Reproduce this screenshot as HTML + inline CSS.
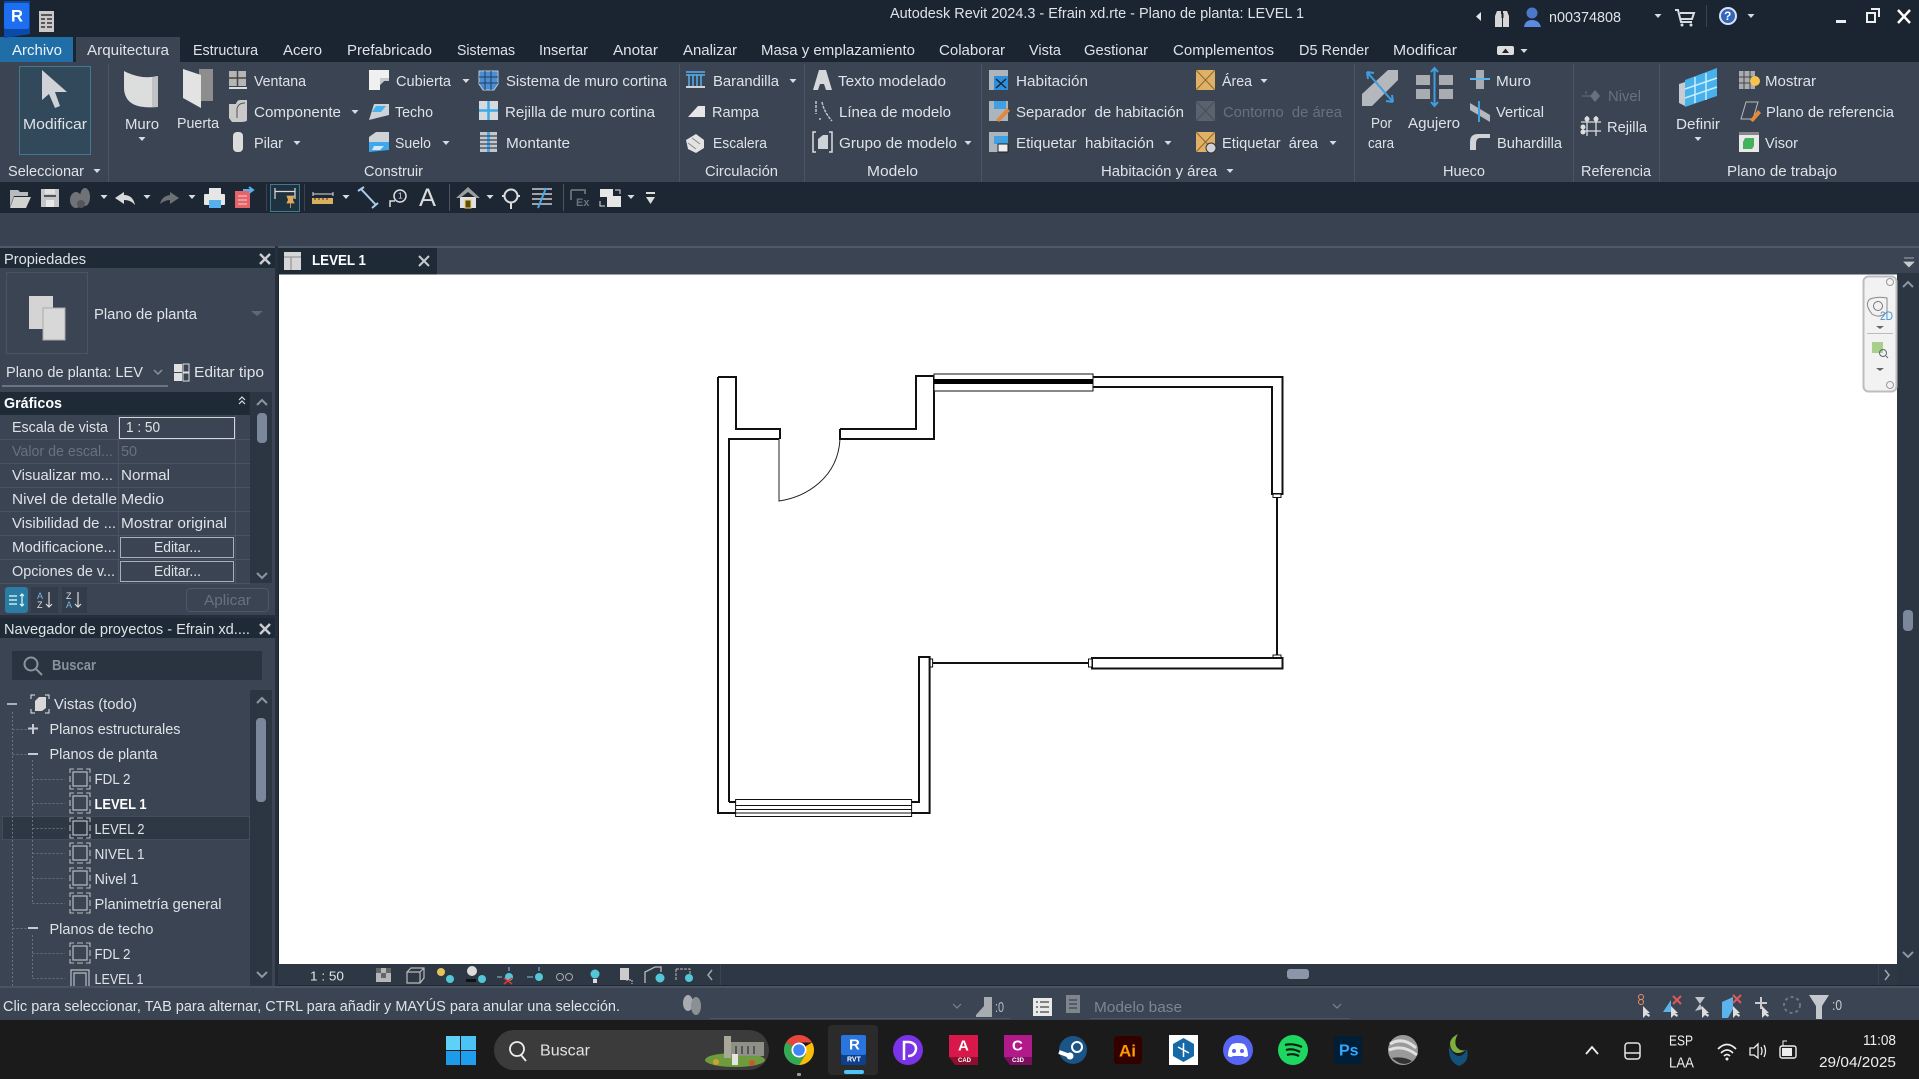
<!DOCTYPE html>
<html lang="es"><head><meta charset="utf-8"><title>Autodesk Revit 2024.3</title>
<style>
html,body{margin:0;padding:0;width:1919px;height:1079px;overflow:hidden;background:#1b2532}
svg{display:block}
text{font-family:"Liberation Sans",sans-serif;font-size:14.7px;fill:#dfe3e7;dominant-baseline:central;transform:translateY(1px)}
.d{fill:#68717d}.b{font-weight:bold;fill:#fff}
.s{fill:none;stroke:#111;stroke-width:2}
.t{fill:#fff;stroke:#111;stroke-width:1}
</style></head><body>
<svg width="1919" height="1079" viewBox="0 0 1919 1079" xmlns="http://www.w3.org/2000/svg">
<defs>
<path id="ar" d="M-3.5 -2H3.5L0 2Z" fill="#d8dce0"/>
<g id="vw" fill="none" stroke="#b9bdc2" stroke-width="1.2"><rect x="3" y="3" width="14" height="14"/><path d="M0 4V0H4M7 0H13M16 0H20V4M20 7V13M20 16V20H16M13 20H7M4 20H0V16M0 13V7" stroke-width="1.1"/></g>
</defs>
<rect width="1919" height="1079" fill="#1b2532"/>
<!-- ribbon -->
<rect y="62" width="1919" height="120" fill="#3a4453"/>
<rect y="182" width="1919" height="31" fill="#1d2734"/>
<rect y="213" width="1919" height="33" fill="#384250"/>
<rect y="246" width="1919" height="2" fill="#4f5967"/>
<rect x="0" y="37" width="73" height="25" fill="#1f6ea8"/>
<rect x="76" y="37" width="104" height="25" fill="#3a4453"/>
<!-- logo -->
<path d="M4 1H30V34L4 38Z" fill="#0a4aa8"/><rect x="4" y="3" width="25" height="26" rx="2" fill="#1d6ef0"/>
<text x="11" y="15" class="b" style="font-size:17px" textLength="12" lengthAdjust="spacingAndGlyphs">R</text>
<rect x="39" y="11" width="15" height="21" fill="#c9c9c9"/><path d="M41 15H52M41 19H45M47 19H52M41 23H45M47 23H52M41 27H45M47 27H52" stroke="#333" stroke-width="1.6"/>
<text x="890" y="13" textLength="414" lengthAdjust="spacingAndGlyphs">Autodesk Revit 2024.3 - Efrain xd.rte - Plano de planta: LEVEL 1</text>
<!-- top right -->
<path d="M1481 12V21L1476 16.500Z" fill="#e6e6e6"/>
<path d="M1495 16L1497 11H1501V14H1502V27H1495ZM1509 16L1507 11H1503V14H1503V27H1509Z" fill="#d6d6d6"/><rect x="1501.500" y="13" width="2" height="5" fill="#1b2532"/>
<circle cx="1532" cy="13" r="5.500" fill="#4d78c8"/><path d="M1524 27Q1525 20 1532 20Q1539 20 1541 27Z" fill="#5d8ae0"/>
<text x="1549" y="17" textLength="72" lengthAdjust="spacingAndGlyphs">n00374808</text>
<use href="#ar" x="1658" y="16"/>
<path d="M1675 10h3l3 12h11M1680 13h14l-2 6h-11" fill="none" stroke="#d8dce0" stroke-width="2"/><circle cx="1682" cy="25" r="1.500" fill="#ddd"/><circle cx="1691" cy="25" r="1.500" fill="#ddd"/>
<rect x="1706" y="5" width="1" height="22" fill="#3a4453"/>
<circle cx="1728" cy="16" r="9" fill="#d7e4f8"/><circle cx="1728" cy="16" r="7" fill="#3465b8"/><text x="1724" y="15" class="b" style="font-size:12px">?</text>
<use href="#ar" x="1751" y="16"/>
<rect x="1836" y="20" width="10" height="3" fill="#eee"/>
<path d="M1871 9h8v8M1867 13h8v9h-8z" fill="none" stroke="#eee" stroke-width="2"/>
<path d="M1898 10L1910 23M1910 10L1898 23" stroke="#fff" stroke-width="2.500"/>
<!-- tabs -->
<text x="12" y="50" style="fill:#eef3f8" textLength="50" lengthAdjust="spacingAndGlyphs">Archivo</text>
<text x="87" y="50" textLength="82" lengthAdjust="spacingAndGlyphs">Arquitectura</text>
<text x="193" y="50" textLength="65" lengthAdjust="spacingAndGlyphs">Estructura</text>
<text x="283" y="50" textLength="39" lengthAdjust="spacingAndGlyphs">Acero</text>
<text x="347" y="50" textLength="85" lengthAdjust="spacingAndGlyphs">Prefabricado</text>
<text x="457" y="50" textLength="58" lengthAdjust="spacingAndGlyphs">Sistemas</text>
<text x="539" y="50" textLength="49" lengthAdjust="spacingAndGlyphs">Insertar</text>
<text x="613" y="50" textLength="45" lengthAdjust="spacingAndGlyphs">Anotar</text>
<text x="683" y="50" textLength="54" lengthAdjust="spacingAndGlyphs">Analizar</text>
<text x="761" y="50" textLength="154" lengthAdjust="spacingAndGlyphs">Masa y emplazamiento</text>
<text x="939" y="50" textLength="66" lengthAdjust="spacingAndGlyphs">Colaborar</text>
<text x="1029" y="50" textLength="32" lengthAdjust="spacingAndGlyphs">Vista</text>
<text x="1084" y="50" textLength="64" lengthAdjust="spacingAndGlyphs">Gestionar</text>
<text x="1173" y="50" textLength="101" lengthAdjust="spacingAndGlyphs">Complementos</text>
<text x="1299" y="50" textLength="70" lengthAdjust="spacingAndGlyphs">D5 Render</text>
<text x="1393" y="50" textLength="64" lengthAdjust="spacingAndGlyphs">Modificar</text>
<rect x="1497" y="46" width="17" height="9" rx="2" fill="#ddd"/><path d="M1502 53L1505.500 48.500L1509 53Z" fill="#222"/><use href="#ar" x="1524" y="51"/>
<!-- ribbon separators -->
<g fill="#4a5462"><rect x="108" y="64" width="1" height="118"/><rect x="679" y="64" width="1" height="118"/><rect x="804" y="64" width="1" height="118"/><rect x="981" y="64" width="1" height="118"/><rect x="1354" y="64" width="1" height="118"/><rect x="1573" y="64" width="1" height="118"/><rect x="1659" y="64" width="1" height="118"/></g>
<!-- Modificar -->
<rect x="19.500" y="66.500" width="71" height="88" fill="#32495b" stroke="#3f7a90"/>
<path d="M42 70V100L49 94L55 108L60 106L55 92L67 92Z" fill="#cfd2d6"/>
<text x="23" y="124" textLength="64" lengthAdjust="spacingAndGlyphs">Modificar</text>
<text x="8" y="171" textLength="76" lengthAdjust="spacingAndGlyphs">Seleccionar</text><use href="#ar" x="97" y="171"/>
<!-- Muro / Puerta -->
<path d="M124 71Q141 80 158 76V107Q135 109 128 100Q124 95 124 88Z" fill="#dcdddd"/><path d="M152 77L158 76V107H152Z" fill="#c0c2c4"/>
<text x="125" y="124" textLength="34" lengthAdjust="spacingAndGlyphs">Muro</text><use href="#ar" x="142" y="139"/>
<rect x="199" y="69" width="14" height="32" fill="#8d8d8d"/><path d="M183 69L201 75V108L183 98Z" fill="#e3e3e3"/>
<text x="177" y="123" textLength="42" lengthAdjust="spacingAndGlyphs">Puerta</text>
<!-- Col 1 -->
<rect x="229" y="71" width="17" height="15" fill="#b5b5b5"/><path d="M237.500 71V86M229 78H246" stroke="#444" stroke-width="1.500"/><rect x="229" y="87" width="18" height="2" fill="#ddd"/>
<path d="M229 104H236Q237 100 240 100H247V120Q247 122 240 122H232L229 118Z" fill="#c9c9c9"/><path d="M237 118V109Q238 103 245 103" fill="none" stroke="#555"/>
<rect x="233" y="132" width="10" height="20" rx="4" fill="#dcdcdc"/>
<text x="254" y="81" textLength="52" lengthAdjust="spacingAndGlyphs">Ventana</text>
<text x="254" y="112" textLength="87" lengthAdjust="spacingAndGlyphs">Componente</text><use href="#ar" x="355" y="112"/>
<text x="254" y="143" textLength="29" lengthAdjust="spacingAndGlyphs">Pilar</text><use href="#ar" x="297" y="143"/>
<!-- Col 2 -->
<path d="M369 70H389V81H384L380 85V90H369Z" fill="#f0f0f0"/><path d="M380 85V78H389V81H384Z" fill="#c6c8cb"/>
<path d="M369 120L374 104H389V115Z" fill="#cfd2d6"/><path d="M372 112L376 106H386L381 112Z" fill="#45b3f0"/>
<path d="M369 137L376 132H389V142H369Z" fill="#cfd2d6"/><path d="M369 152V142H389V150Z" fill="#3fa8ea"/><path d="M374 146H384L380 150H372Z" fill="#cfeaff"/>
<text x="396" y="81" textLength="55" lengthAdjust="spacingAndGlyphs">Cubierta</text><use href="#ar" x="466" y="81"/>
<text x="395" y="112" textLength="38" lengthAdjust="spacingAndGlyphs">Techo</text>
<text x="395" y="143" textLength="36" lengthAdjust="spacingAndGlyphs">Suelo</text><use href="#ar" x="446" y="143"/>
<!-- Col 3 -->
<path d="M479 71H498V84L494 90H483L479 84Z" fill="#4b8fd2" stroke="#b8c8d8"/><path d="M485 71V90M491 71V90M479 77H498M479 83H498" stroke="#1f3c5c"/>
<rect x="479" y="101" width="19" height="19" fill="#d7dadd"/><path d="M488.500 101V120M479 110.500H498" stroke="#3fa8ea" stroke-width="2.500"/>
<rect x="480" y="132" width="17" height="20" fill="#c3c7cc"/><path d="M488.500 132V152" stroke="#3fa8ea" stroke-width="3"/><path d="M480 136H497M480 140H497M480 144H497M480 148H497" stroke="#3a4453" stroke-width="1.300"/>
<text x="506" y="81" textLength="161" lengthAdjust="spacingAndGlyphs">Sistema de muro cortina</text>
<text x="505" y="112" textLength="150" lengthAdjust="spacingAndGlyphs">Rejilla de muro cortina</text>
<text x="506" y="143" textLength="64" lengthAdjust="spacingAndGlyphs">Montante</text>
<text x="364" y="171" textLength="59" lengthAdjust="spacingAndGlyphs">Construir</text>
<!-- Circulacion -->
<path d="M686 72H705M686 75H705M689 75V87M693 75V87M697 75V87M701 75V87" stroke="#56b0ee" stroke-width="1.500"/><rect x="686" y="86" width="19" height="2" fill="#cfd2d6"/>
<path d="M688 117L698 106H705V117Z" fill="#e6e6e6"/>
<path d="M686 140L696 134L704 140V148L696 153L688 149Z" fill="#e3e3e3"/><path d="M692 138L700 144M688 143L696 149" stroke="#888"/>
<text x="713" y="81" textLength="66" lengthAdjust="spacingAndGlyphs">Barandilla</text><use href="#ar" x="793" y="81"/>
<text x="712" y="112" textLength="47" lengthAdjust="spacingAndGlyphs">Rampa</text>
<text x="713" y="143" textLength="54" lengthAdjust="spacingAndGlyphs">Escalera</text>
<text x="705" y="171" textLength="73" lengthAdjust="spacingAndGlyphs">Circulación</text>
<!-- Modelo -->
<path d="M813 90L819 70H826L832 90H826L824 84H820L818 90Z" fill="#d5d7da"/>
<path d="M816 101V114M820 118V120M822 102Q824 112 832 121" fill="none" stroke="#bfc3c8" stroke-width="1.500" stroke-dasharray="3 1"/>
<path d="M816 132H813V152H816M829 132H832V152H829" fill="none" stroke="#ddd" stroke-width="1.500"/><path d="M818 139L823 135H828V149H818Z" fill="#cfd2d6"/>
<text x="838" y="81" textLength="108" lengthAdjust="spacingAndGlyphs">Texto modelado</text>
<text x="839" y="112" textLength="112" lengthAdjust="spacingAndGlyphs">Línea de modelo</text>
<text x="839" y="143" textLength="118" lengthAdjust="spacingAndGlyphs">Grupo de modelo</text><use href="#ar" x="968" y="143"/>
<text x="867" y="171" textLength="51" lengthAdjust="spacingAndGlyphs">Modelo</text>
<!-- Habitacion -->
<rect x="989" y="70" width="19" height="20" fill="#aeb4bb"/><rect x="994" y="76" width="14" height="14" fill="#2f8fdc"/><path d="M996 79L1006 88M1006 79L996 88" stroke="#123" stroke-width="1.300"/>
<rect x="989" y="101" width="19" height="20" fill="#aeb4bb"/><rect x="994" y="101" width="12" height="8" fill="#3fa0e4"/><path d="M996 120L1007 108L1010 111L999 122Z" fill="#e4873b"/>
<rect x="989" y="132" width="19" height="20" fill="#aeb4bb"/><rect x="994" y="136" width="14" height="8" fill="#3fa0e4"/><rect x="998" y="144" width="10" height="8" fill="#eee" stroke="#222"/>
<text x="1016" y="81" textLength="72" lengthAdjust="spacingAndGlyphs">Habitación</text>
<text x="1016" y="112" textLength="168" lengthAdjust="spacingAndGlyphs">Separador&#160; de habitación</text>
<text x="1016" y="143" textLength="138" lengthAdjust="spacingAndGlyphs">Etiquetar&#160; habitación</text><use href="#ar" x="1168" y="143"/>
<rect x="1196" y="70" width="19" height="20" fill="#e0b066"/><path d="M1196 70L1215 90M1215 70L1196 90" stroke="#8a6a30"/>
<rect x="1196" y="101" width="19" height="20" fill="#5a626d"/><path d="M1196 101L1215 121M1215 101L1196 121" stroke="#474e58"/>
<rect x="1196" y="132" width="19" height="20" fill="#e0b066"/><path d="M1196 132L1215 152M1215 132L1196 152" stroke="#8a6a30"/><circle cx="1211" cy="148" r="5" fill="#cfd2d6" stroke="#333"/>
<text x="1222" y="81" textLength="30" lengthAdjust="spacingAndGlyphs">Área</text><use href="#ar" x="1264" y="81"/>
<text x="1223" y="112" class="d" textLength="119" lengthAdjust="spacingAndGlyphs">Contorno&#160; de área</text>
<text x="1222" y="143" textLength="96" lengthAdjust="spacingAndGlyphs">Etiquetar&#160; área</text><use href="#ar" x="1333" y="143"/>
<text x="1101" y="171" textLength="116" lengthAdjust="spacingAndGlyphs">Habitación y área</text><use href="#ar" x="1230" y="171"/>
<!-- Hueco -->
<path d="M1362 94L1388 70H1398V80L1372 106H1362Z" fill="#b4b7bb"/><path d="M1367 72L1393 102M1367 72l1 7M1367 72l7 1M1393 102l-1-7M1393 102l-7-1" stroke="#3f9ee0" stroke-width="2" fill="none"/>
<text x="1371" y="123" textLength="21" lengthAdjust="spacingAndGlyphs">Por</text><text x="1368" y="143" textLength="26" lengthAdjust="spacingAndGlyphs">cara</text>
<g fill="#a9acb0"><rect x="1416" y="75" width="14" height="10"/><rect x="1439" y="75" width="14" height="10"/><rect x="1416" y="89" width="14" height="10"/><rect x="1439" y="89" width="14" height="10"/></g><path d="M1434.500 68V106M1431 72L1434.500 68L1438 72M1431 102L1434.500 106L1438 102" stroke="#3f9ee0" stroke-width="2" fill="none"/>
<text x="1408" y="123" textLength="52" lengthAdjust="spacingAndGlyphs">Agujero</text>
<rect x="1476" y="70" width="8" height="19" fill="#a9acb0"/><path d="M1470 79H1490" stroke="#5ab4ee" stroke-width="2"/>
<path d="M1470 103L1490 115V122L1470 110Z" fill="#b4b7bb"/><path d="M1479 101V122" stroke="#3f9ee0" stroke-width="2"/>
<path d="M1470 150V142Q1470 134 1478 134H1490V138H1480Q1476 138 1476 144V150Z" fill="#d0d2d6"/>
<text x="1496" y="81" textLength="35" lengthAdjust="spacingAndGlyphs">Muro</text>
<text x="1496" y="112" textLength="48" lengthAdjust="spacingAndGlyphs">Vertical</text>
<text x="1497" y="143" textLength="65" lengthAdjust="spacingAndGlyphs">Buhardilla</text>
<text x="1443" y="171" textLength="42" lengthAdjust="spacingAndGlyphs">Hueco</text>
<!-- Referencia -->
<path d="M1582 96H1590M1586 91V94" stroke="#68717d"/><path d="M1595 90L1600 96L1595 102L1590 96Z" fill="#68717d"/>
<text x="1608" y="96" class="d" textLength="33" lengthAdjust="spacingAndGlyphs">Nivel</text>
<path d="M1581 122H1601M1581 131H1601M1587 116V136M1596 116V136" stroke="#ddd" stroke-width="1.300"/><g fill="#ddd"><circle cx="1587" cy="119" r="2.500"/><circle cx="1596" cy="119" r="2.500"/><circle cx="1583" cy="127" r="2.500"/><circle cx="1583" cy="132" r="2.500"/></g>
<text x="1607" y="127" textLength="40" lengthAdjust="spacingAndGlyphs">Rejilla</text>
<text x="1581" y="171" textLength="70" lengthAdjust="spacingAndGlyphs">Referencia</text>
<!-- Plano -->
<path d="M1679 84L1685 82V106L1679 103Z" fill="#c8cbd0"/><path d="M1685 80L1717 68V96L1685 107Z" fill="#46b1ea"/><path d="M1695 77V103M1706 73V100M1685 89L1717 78M1685 98L1717 87" stroke="#c7ecff" stroke-width="1.500"/>
<text x="1676" y="124" textLength="44" lengthAdjust="spacingAndGlyphs">Definir</text><use href="#ar" x="1698" y="139"/>
<rect x="1739" y="71" width="16" height="18" fill="#a9acb0"/><path d="M1744 71V89M1750 71V89M1739 77H1755M1739 83H1755" stroke="#444"/><circle cx="1755" cy="81" r="5" fill="#f4c34e"/>
<path d="M1741 119L1746 102H1758L1753 119Z" fill="none" stroke="#bbb"/><path d="M1750 120L1758 110L1761 113L1753 122Z" fill="#e48a3b"/>
<rect x="1739" y="132" width="20" height="20" fill="#e9e9e9"/><rect x="1739" y="132" width="20" height="3" fill="#888"/><path d="M1743 142L1745 138H1754V146L1752 149H1743Z" fill="#41b35b"/>
<text x="1765" y="81" textLength="51" lengthAdjust="spacingAndGlyphs">Mostrar</text>
<text x="1766" y="112" textLength="128" lengthAdjust="spacingAndGlyphs">Plano de referencia</text>
<text x="1765" y="143" textLength="33" lengthAdjust="spacingAndGlyphs">Visor</text>
<text x="1727" y="171" textLength="110" lengthAdjust="spacingAndGlyphs">Plano de trabajo</text>
<!-- QAT -->
<path d="M10 190H18L20 192H28V196H14L10 207Z" fill="#b8bbbe"/><path d="M14 197H31L26 208H10Z" fill="#d2d2d0"/>
<rect x="41" y="189" width="18" height="18" fill="#c4c6c8"/><rect x="45" y="189" width="10" height="5" fill="#e0e0e0"/><rect x="44" y="195" width="12" height="2" fill="#555"/><rect x="46" y="200" width="8" height="7" fill="#e8e8e8"/>
<ellipse cx="76" cy="200" rx="6" ry="8" fill="#6f7377"/><ellipse cx="85" cy="197" rx="5" ry="9" fill="#6f7377"/><circle cx="81" cy="204" r="4" fill="#53575b"/>
<use href="#ar" x="104" y="197"/>
<path d="M115 198L124 192V195Q133 195 135 205Q131 200 124 200V204Z" fill="#d8d9da"/><use href="#ar" x="147" y="197"/>
<path d="M179 198L170 192V195Q162 196 160 204Q165 200 170 200V204Z" fill="#6d7176"/><use href="#ar" x="192" y="197"/>
<rect x="209" y="188" width="12" height="6" fill="#e6e6e6"/><rect x="204" y="194" width="21" height="11" rx="1" fill="#e6e6e6"/><rect x="209" y="200" width="12" height="8" fill="#56b0ee"/>
<rect x="235" y="191" width="15" height="17" fill="#e5646a"/><path d="M238 196H247M238 200H247M238 204H247" stroke="#f5cfd0"/><path d="M243 190H252M249 187L253 190L249 193" fill="none" stroke="#56b0ee" stroke-width="2"/>
<rect x="266" y="184" width="1" height="27" fill="#3a4453"/>
<rect x="270.500" y="184.500" width="29" height="27" fill="#1f3240" stroke="#3f7a90"/>
<path d="M275 188V199M295 188V199M275 191.500H295" stroke="#ddd" stroke-width="1.200" fill="none"/><path d="M287 196H294L292.500 200L294 203H287L288.500 200ZM290.500 203V208" fill="#e0a85a" stroke="#e0a85a" stroke-width=".8"/>
<rect x="304" y="184" width="1" height="27" fill="#3a4453"/>
<path d="M313 192V196M333 192V196M313 194H333" stroke="#ddd" fill="none"/><rect x="312" y="198" width="21" height="6" fill="#d9b05c"/><path d="M315 198v2M319 198v2M323 198v2M327 198v2" stroke="#333"/><use href="#ar" x="346" y="197"/>
<path d="M358 191L364 187M361 189L376 205M372 208L378 203" stroke="#a9cfe6" stroke-width="2"/>
<circle cx="400" cy="196" r="6" fill="none" stroke="#ddd" stroke-width="1.500"/><text x="398" y="195" style="font-size:8px">1</text><path d="M390 207V201H395" fill="none" stroke="#ddd" stroke-width="1.500"/>
<text x="419" y="197" style="font-size:25px;fill:#d8dadc" textLength="17" lengthAdjust="spacingAndGlyphs">A</text>
<rect x="449" y="184" width="1" height="27" fill="#4a5462"/>
<path d="M460 197H476V208H460Z" fill="#dfe0e1"/><path d="M456 198L468 187L480 198L476 198L468 192L460 198Z" fill="#9b9ea1"/><rect x="465" y="200" width="6" height="8" fill="#5a4a1c" stroke="#f1d155"/>
<use href="#ar" x="490" y="197"/>
<circle cx="511" cy="196" r="6.500" fill="none" stroke="#ddd" stroke-width="2"/><path d="M502 196H504M518 196H520M511 203V209" stroke="#ddd" stroke-width="2"/>
<path d="M532 189H552M532 194H552M532 199H552M532 204H552" stroke="#ccc" stroke-width="1.500"/><path d="M538 208L546 188" stroke="#4ba6e8" stroke-width="2"/>
<rect x="563" y="184" width="1" height="27" fill="#4a5462"/>
<path d="M571 190H585V194M571 190V200" fill="none" stroke="#656a70" stroke-width="2"/><text x="576" y="202" class="d" style="font-size:11px;font-weight:bold">Ex</text>
<rect x="600" y="189" width="13" height="8" fill="#e6e6e6"/><rect x="607" y="196" width="14" height="11" fill="#e6e6e6"/><path d="M615 190H620V194M600 201V206H605" fill="none" stroke="#ddd"/>
<use href="#ar" x="631" y="197"/>
<rect x="646" y="192" width="9" height="2" fill="#ddd"/><path d="M646 197H655L650.500 204Z" fill="#ddd"/>
<!-- left panel -->
<rect x="0" y="248" width="275" height="740" fill="#3a4453"/>
<rect x="0" y="248" width="275" height="20" fill="#1f2a37"/>
<text x="4" y="259" textLength="82" lengthAdjust="spacingAndGlyphs">Propiedades</text>
<path d="M260 254L270 264M270 254L260 264" stroke="#c8ccd0" stroke-width="2.500"/>
<rect x="275" y="246" width="3" height="742" fill="#262f3b"/>
<rect x="6.500" y="272.500" width="81" height="81" fill="none" stroke="#4a5462"/>
<rect x="29" y="296" width="24" height="33" fill="#d4d4d4"/><rect x="43" y="308" width="22" height="32" fill="#d8d8d8" stroke="#aaa"/>
<text x="94" y="314" textLength="103" lengthAdjust="spacingAndGlyphs">Plano de planta</text>
<path d="M251 311H263L257 316Z" fill="#5f6875"/>
<text x="6" y="372" textLength="137" lengthAdjust="spacingAndGlyphs">Plano de planta: LEV</text>
<path d="M154 370L158 374L162 370" fill="none" stroke="#8a929c" stroke-width="1.500"/>
<rect x="2" y="385" width="166" height="2" fill="#6a7482"/>
<rect x="174" y="364" width="8" height="8" fill="#e0e0e0"/><rect x="174" y="373" width="8" height="8" fill="#e0e0e0"/><rect x="183" y="364" width="6" height="8" fill="none" stroke="#e0e0e0"/><rect x="183" y="373" width="6" height="8" fill="none" stroke="#e0e0e0"/>
<text x="194" y="372" textLength="70" lengthAdjust="spacingAndGlyphs">Editar tipo</text>
<rect x="0" y="392" width="250" height="23" fill="#1f2a37"/>
<text x="4" y="403" class="b" textLength="58" lengthAdjust="spacingAndGlyphs">Gráficos</text>
<path d="M239 400L242 397L245 400M239 404L242 401L245 404" fill="none" stroke="#ddd" stroke-width="1.200"/>
<rect x="250" y="392" width="22" height="191" fill="#2c3643"/>
<path d="M257 405L262 400L267 405" fill="none" stroke="#8d96a2" stroke-width="2"/><rect x="257" y="413" width="10" height="30" rx="4" fill="#7b879a"/>
<path d="M257 573L262 578L267 573" fill="none" stroke="#8d96a2" stroke-width="2"/>
<g stroke="#4a5462" fill="none"><path d="M0 439.500H250M0 463.500H250M0 487.500H250M0 511.500H250M0 535.500H250M0 559.500H250M0 583.500H250"/><path d="M118.500 415V584M235.500 415V584"/></g>
<rect x="119.500" y="417.500" width="115" height="21" fill="#3a4453" stroke="#d4d6d9"/>
<text x="12" y="427" textLength="96" lengthAdjust="spacingAndGlyphs">Escala de vista</text>
<text x="126" y="427" textLength="34" lengthAdjust="spacingAndGlyphs">1 : 50</text>
<text x="12" y="451" class="d" textLength="101" lengthAdjust="spacingAndGlyphs">Valor de escal...</text>
<text x="121" y="451" class="d" textLength="16" lengthAdjust="spacingAndGlyphs">50</text>
<text x="12" y="475" textLength="101" lengthAdjust="spacingAndGlyphs">Visualizar mo...</text>
<text x="121" y="475" textLength="49" lengthAdjust="spacingAndGlyphs">Normal</text>
<text x="12" y="499" textLength="105" lengthAdjust="spacingAndGlyphs">Nivel de detalle</text>
<text x="121" y="499" textLength="43" lengthAdjust="spacingAndGlyphs">Medio</text>
<text x="12" y="523" textLength="104" lengthAdjust="spacingAndGlyphs">Visibilidad de ...</text>
<text x="121" y="523" textLength="106" lengthAdjust="spacingAndGlyphs">Mostrar original</text>
<text x="12" y="547" textLength="104" lengthAdjust="spacingAndGlyphs">Modificacione...</text>
<rect x="120.500" y="537.500" width="113" height="20" fill="#3a4453" stroke="#aab0b8"/><text x="154" y="547" textLength="47" lengthAdjust="spacingAndGlyphs">Editar...</text>
<text x="12" y="571" textLength="103" lengthAdjust="spacingAndGlyphs">Opciones de v...</text>
<rect x="120.500" y="561.500" width="113" height="20" fill="#3a4453" stroke="#aab0b8"/><text x="154" y="571" textLength="47" lengthAdjust="spacingAndGlyphs">Editar...</text>
<rect x="5" y="587" width="23" height="26" rx="3" fill="#2a7ca5"/><path d="M9 596H17M9 600H17M9 604H17M22 594V606M20 596L22 594L24 596M20 604L22 606L24 604" fill="none" stroke="#dff" stroke-width="1.200"/>
<rect x="31" y="587" width="27" height="26" fill="#323c4a"/><text x="37" y="595" style="font-size:9px;fill:#7ab7e8">A</text><text x="37" y="604" style="font-size:9px">Z</text><path d="M49 592V607M46 604L49 607L52 604" fill="none" stroke="#ddd" stroke-width="1.200"/>
<rect x="62" y="587" width="25" height="26" fill="#323c4a"/><text x="66" y="595" style="font-size:9px">Z</text><text x="66" y="604" style="font-size:9px;fill:#7ab7e8">A</text><path d="M78 592V607M75 604L78 607L81 604" fill="none" stroke="#ddd" stroke-width="1.200"/>
<rect x="186.500" y="588.500" width="82" height="23" rx="4" fill="none" stroke="#4e5866"/>
<text x="204" y="600" class="d" textLength="47" lengthAdjust="spacingAndGlyphs">Aplicar</text>
<rect x="0" y="615" width="275" height="3" fill="#262f3b"/>
<rect x="0" y="618" width="275" height="20" fill="#1f2a37"/>
<text x="4" y="629" textLength="246" lengthAdjust="spacingAndGlyphs">Navegador de proyectos - Efrain xd....</text>
<path d="M260 624L270 634M270 624L260 634" stroke="#c8ccd0" stroke-width="2.500"/>
<rect x="12" y="651" width="250" height="29" fill="#2a3441"/>
<circle cx="31" cy="664" r="6.500" fill="none" stroke="#8b929c" stroke-width="2"/><path d="M36 669L42 675" stroke="#8b929c" stroke-width="2"/>
<text x="52" y="665" style="fill:#87909b;font-weight:bold" textLength="44" lengthAdjust="spacingAndGlyphs">Buscar</text>
<!-- tree -->
<rect x="250" y="690" width="22" height="298" fill="#2c3643"/>
<path d="M257 703L262 698L267 703" fill="none" stroke="#8d96a2" stroke-width="2"/><rect x="256" y="718" width="10" height="84" rx="4" fill="#7b879a"/>
<path d="M257 972L262 977L267 972" fill="none" stroke="#8d96a2" stroke-width="2"/>
<rect x="2.500" y="816.500" width="247" height="23" fill="#2e3744" stroke="#424c5a"/>
<g stroke="#6a7280" stroke-dasharray="2 2" fill="none"><path d="M12.500 712V987M12.500 729.500H27M12.500 754.500H27M12.500 928.500H27M32.500 760V903.500M32.500 779.500H65M32.500 803.500H65M32.500 828.500H65M32.500 853.500H65M32.500 878.500H65M32.500 903.500H65M32.500 935V978M32.500 953.500H65M32.500 978.500H65"/></g>
<rect x="7" y="703" width="10" height="2" fill="#aab0b8"/>
<path d="M28 728.500H38M33 724V734" stroke="#c7cbd0" stroke-width="2"/>
<rect x="28" y="753" width="10" height="2" fill="#c7cbd0"/><rect x="28" y="927" width="10" height="2" fill="#c7cbd0"/>
<path d="M31 699V695H35M45 695H49V699M49 709V713H45M35 713H31V709" fill="none" stroke="#c9ccd0" stroke-width="1.200"/><path d="M35 701L39 697H46V708L42 711H35Z" fill="#d8d8d8"/>
<text x="54" y="704" textLength="83" lengthAdjust="spacingAndGlyphs">Vistas (todo)</text>
<text x="49.500" y="729" textLength="131" lengthAdjust="spacingAndGlyphs">Planos estructurales</text>
<text x="49.500" y="754" textLength="108" lengthAdjust="spacingAndGlyphs">Planos de planta</text>
<use href="#vw" x="70" y="769"/><text x="94.500" y="779" textLength="36" lengthAdjust="spacingAndGlyphs">FDL 2</text>
<use href="#vw" x="70" y="793"/><text x="94.500" y="804" class="b" textLength="52" lengthAdjust="spacingAndGlyphs">LEVEL 1</text>
<use href="#vw" x="70" y="818"/><text x="94.500" y="829" textLength="50" lengthAdjust="spacingAndGlyphs">LEVEL 2</text>
<use href="#vw" x="70" y="843"/><text x="94.500" y="854" textLength="50" lengthAdjust="spacingAndGlyphs">NIVEL 1</text>
<use href="#vw" x="70" y="868"/><text x="94.500" y="879" textLength="44" lengthAdjust="spacingAndGlyphs">Nivel 1</text>
<use href="#vw" x="70" y="893"/><text x="94.500" y="904" textLength="127" lengthAdjust="spacingAndGlyphs">Planimetría general</text>
<text x="49.500" y="929" textLength="104" lengthAdjust="spacingAndGlyphs">Planos de techo</text>
<use href="#vw" x="70" y="943"/><text x="94.500" y="954" textLength="36" lengthAdjust="spacingAndGlyphs">FDL 2</text>
<path d="M71 987V970H89V987M74 987V973H86V987" fill="none" stroke="#b9bdc2" stroke-width="1.200"/><text x="94.500" y="979" textLength="49" lengthAdjust="spacingAndGlyphs">LEVEL 1</text>
<!-- view tab strip -->
<rect x="278" y="248" width="1641" height="27" fill="#3a4453"/>
<rect x="278" y="248" width="159" height="27" fill="#1f2a37"/>
<rect x="284" y="252" width="17" height="18" fill="#d6d6d6"/><path d="M284 257H301M291 257V270" stroke="#888"/>
<text x="312" y="260" class="b" textLength="54" lengthAdjust="spacingAndGlyphs">LEVEL 1</text>
<path d="M419 256L429 266M429 256L419 266" stroke="#c8ccd0" stroke-width="2"/>
<path d="M1904 258H1914M1904 262H1914L1909 267Z" fill="#c8ccd0" stroke="#c8ccd0" stroke-width=".7"/>
<!-- canvas -->
<rect x="279" y="274.500" width="1618" height="689.500" fill="#fff"/>
<rect x="1897" y="273" width="22" height="713" fill="#2c3643"/>
<path d="M1903 287L1908 282L1913 287" fill="none" stroke="#8d96a2" stroke-width="2"/>
<rect x="1903" y="610" width="10" height="21" rx="4" fill="#7b879a"/>
<path d="M1903 952L1908 957L1913 952" fill="none" stroke="#8d96a2" stroke-width="2"/>
<!-- plan -->
<g>
<path class="s" d="M729 802V439H779M718 377H736V429H780V439M718 377V813H736M840 429V439H934V376H916V429H840"/>
<rect x="779" y="429" width="2" height="10" fill="#111"/>
<path d="M779 439V501C806 497 838 478 840 439" fill="none" stroke="#222" stroke-width="1"/>
<path class="s" d="M1093 377H1282.500V494H1272V387H1093"/>
<rect x="934" y="374" width="159" height="17" class="t"/><rect x="934" y="379" width="159" height="5" fill="#000"/>
<rect x="1273" y="494" width="8" height="3.500" class="t"/>
<path d="M1277 497V655" stroke="#111" stroke-width="2"/>
<rect x="1273" y="655" width="8" height="3.500" class="t"/>
<rect x="1092" y="658" width="190.500" height="10.500" fill="#fff" stroke="#111" stroke-width="2"/>
<rect x="1088.500" y="659" width="3.500" height="8" class="t"/>
<path d="M933 663H1088.500" stroke="#111" stroke-width="2"/>
<rect x="929.600" y="659" width="3" height="8" class="t"/>
<path class="s" d="M736 802H729M912 802H919V657H929.600V813H912"/>
<rect x="735.600" y="799.500" width="176" height="17" class="t"/><path d="M735.600 805.500H911.600M735.600 809.500H911.600M735.600 813H911.600" stroke="#111" stroke-width="1"/>
</g>
<!-- nav widget -->
<rect x="1863.500" y="276.500" width="33" height="115" rx="5" fill="#f2f2f2" stroke="#bdbdbd" stroke-width="2"/>
<circle cx="1890" cy="282" r="3.500" fill="none" stroke="#999"/><circle cx="1890" cy="385" r="3.500" fill="none" stroke="#999"/>
<path d="M1872 314Q1864 304 1870 299Q1878 296 1887 298V312Q1880 319 1872 314Z" fill="none" stroke="#888"/><circle cx="1878" cy="306" r="4.500" fill="none" stroke="#777"/>
<text x="1880" y="315" style="font-size:12px;fill:#4a90d0" textLength="13" lengthAdjust="spacingAndGlyphs">2D</text>
<path d="M1876 326H1884L1880 329Z" fill="#666"/><rect x="1867" y="333" width="26" height="1" fill="#bbb"/>
<rect x="1872" y="342" width="11" height="11" fill="#a9cf8d"/><circle cx="1883" cy="353" r="3.500" fill="none" stroke="#666"/><path d="M1886 356L1888 358" stroke="#666"/>
<path d="M1876 368H1884L1880 371Z" fill="#666"/>
<!-- view bar -->
<rect x="278" y="964" width="1619" height="22" fill="#2e3845"/>
<rect x="278" y="985" width="1641" height="1" fill="#1e2632"/>
<text x="310" y="975" style="font-size:13px" textLength="34" lengthAdjust="spacingAndGlyphs">1 : 50</text>
<rect x="376" y="968" width="15" height="14" fill="#b4b6b8"/><path d="M376 968h5v5h-5zM386 968h5v5h-5zM381 973h5v5h-5z" fill="#666"/>
<path d="M407 972L411 968H424V978L420 983H407ZM407 972H420V983M420 972L424 968" fill="none" stroke="#bbb" stroke-width="1.200"/>
<circle cx="441" cy="972" r="4" fill="#e4c35a"/><circle cx="450" cy="979" r="4" fill="#53c7d8"/>
<circle cx="472" cy="971" r="5" fill="#ddd"/><rect x="466" y="979" width="10" height="3" fill="#111"/><circle cx="482" cy="979" r="4" fill="#53c7d8"/>
<circle cx="509" cy="977" r="4" fill="#53c7d8"/><path d="M504 984L512 978M512 984L504 978" stroke="#e23838" stroke-width="1.500"/><path d="M497 977h5M509 967v4" stroke="#8bc0e8"/>
<circle cx="539" cy="977" r="4" fill="#53c7d8"/><path d="M527 977h6M539 967v4" stroke="#8bc0e8"/>
<circle cx="560" cy="977" r="3.500" fill="none" stroke="#aaa"/><circle cx="569" cy="977" r="3.500" fill="none" stroke="#aaa"/>
<circle cx="595" cy="974" r="4.500" fill="#53c7d8"/><rect x="593" y="979" width="4" height="4" fill="#ddd"/>
<rect x="620" y="968" width="9" height="12" fill="#ccc"/><path d="M626 980h6v4" fill="none" stroke="#ccc" stroke-dasharray="2 1"/>
<path d="M645 983V972L655 967H661V972" fill="none" stroke="#bbb" stroke-width="1.300"/><circle cx="660" cy="978" r="4.500" fill="#53c7d8"/>
<path d="M676 969V981M676 969H690V974" fill="none" stroke="#bbb" stroke-dasharray="3 1"/><circle cx="689" cy="978" r="4" fill="#53c7d8"/>
<path d="M712 970L708 975L712 980" fill="none" stroke="#a0a7b0" stroke-width="1.500"/>
<rect x="720" y="964" width="1" height="21" fill="#3a4453"/>
<rect x="1287" y="969" width="22" height="10" rx="3" fill="#8b97a9"/>
<path d="M1885 970L1889 975L1885 980" fill="none" stroke="#a0a7b0" stroke-width="1.500"/><rect x="1878" y="964" width="1" height="21" fill="#3a4453"/>
<!-- status -->
<rect x="0" y="988" width="1919" height="32" fill="#3a4453"/>
<rect x="0" y="986" width="1919" height="2" fill="#4a5462"/>
<text x="3" y="1006" textLength="617" lengthAdjust="spacingAndGlyphs">Clic para seleccionar, TAB para alternar, CTRL para añadir y MAYÚS para anular una selección.</text>
<ellipse cx="688" cy="1003" rx="5" ry="8" fill="#a8acb0"/><ellipse cx="696" cy="1006" rx="5" ry="9" fill="#8c9095"/>
<rect x="710" y="1018" width="300" height="1" fill="#4a5462"/>
<path d="M953 1004L957 1008L961 1004" fill="none" stroke="#7b848f" stroke-width="1.200"/>
<path d="M976 1015L984 1006V997H992V1017H976Z" fill="#a8acb0"/>
<text x="995" y="1007" class="d" style="fill:#b8bdc3" textLength="9" lengthAdjust="spacingAndGlyphs">:0</text>
<rect x="1033" y="998" width="19" height="18" fill="#e9e9e9"/><path d="M1036 1002h2M1040 1002h9M1036 1007h2M1040 1007h9M1036 1012h2M1040 1012h9" stroke="#444" stroke-width="1.300"/>
<rect x="1066" y="995" width="14" height="18" fill="#7f858c"/><path d="M1069 1000h8M1069 1004h8M1069 1008h8" stroke="#3a4453" stroke-width="1.300"/>
<text x="1094" y="1007" class="d" style="fill:#7d8691" textLength="88" lengthAdjust="spacingAndGlyphs">Modelo base</text>
<rect x="1090" y="1018" width="260" height="1" fill="#4a5462"/>
<path d="M1333 1004L1337 1008L1341 1004" fill="none" stroke="#7b848f" stroke-width="1.200"/>
<g>
<circle cx="1641" cy="997" r="2.500" fill="none" stroke="#e89060"/><circle cx="1641" cy="1002" r="2.500" fill="none" stroke="#e89060"/><path d="M1643 1006V1018L1646 1015L1649 1017L1650 1015L1647 1013H1650Z" fill="#ddd"/>
<path d="M1663 1012L1671 1000V1012Z" fill="#5ab3ea"/><path d="M1673 996L1681 1004M1681 996L1673 1004" stroke="#e25858" stroke-width="2"/><path d="M1671 1006V1018L1674 1015L1677 1017L1678 1015L1675 1013H1678Z" fill="#ddd"/>
<path d="M1695 997H1705L1700 1004ZM1695 1011L1700 1004L1703 1009" fill="#c0c3c7"/><path d="M1702 1006V1018L1705 1015L1708 1017L1709 1015L1706 1013H1709Z" fill="#ddd"/>
<path d="M1722 1018V1002L1733 997V1009L1728 1018Z" fill="#5ab3ea"/><path d="M1733 995L1741 1003M1741 995L1733 1003" stroke="#e25858" stroke-width="2"/><path d="M1733 1006V1018L1736 1015L1739 1017L1740 1015L1737 1013H1740Z" fill="#ddd"/>
<path d="M1755 1003H1767M1761 997V1009" stroke="#ccc" stroke-width="2"/><path d="M1762 1006V1018L1765 1015L1768 1017L1769 1015L1766 1013H1769Z" fill="#ddd"/>
<circle cx="1792" cy="1005" r="8" fill="none" stroke="#6f7782" stroke-width="2" stroke-dasharray="3 3"/>
<path d="M1809 995H1829L1822 1006V1019H1816V1006Z" fill="#c4c7cb"/>
<text x="1832" y="1005" style="fill:#c8ccd0" textLength="10" lengthAdjust="spacingAndGlyphs">:0</text>
</g>
<!-- taskbar -->
<rect x="0" y="1020" width="1919" height="59" fill="#1b1b1b"/>
<g fill="#2fb6f5"><rect x="446" y="1036" width="14" height="14" fill="#5fd0f8"/><rect x="461" y="1036" width="15" height="14" fill="#4cc3f7"/><rect x="446" y="1051" width="14" height="14" fill="#1d9be8"/><rect x="461" y="1051" width="15" height="14" fill="#1f9ef0"/></g>
<rect x="494" y="1030" width="275" height="40" rx="20" fill="#3b3b3b"/>
<circle cx="517" cy="1049" r="7" fill="none" stroke="#eee" stroke-width="1.800"/><path d="M521 1055L526 1061" stroke="#eee" stroke-width="1.800"/>
<text x="540" y="1050" style="font-size:15.500px;fill:#e2e2e2" textLength="50" lengthAdjust="spacingAndGlyphs">Buscar</text>
<ellipse cx="735" cy="1060" rx="30" ry="7" fill="#6f9a3d"/><rect x="724" y="1036" width="7" height="22" fill="#a8a898"/><rect x="731" y="1042" width="33" height="14" fill="#8f9088"/><path d="M735 1046h2v8h-2zM741 1046h2v8h-2zM747 1046h2v8h-2zM753 1046h2v8h-2z" fill="#555"/><rect x="732" y="1054" width="6" height="11" fill="#e4e4e4"/><circle cx="716" cy="1062" r="3" fill="#d0a030"/><circle cx="752" cy="1063" r="3" fill="#c65a2a"/>
<!-- chrome -->
<g><path d="M799 1035A15 15 0 0 1 812 1042.500H799A7.500 7.500 0 0 0 792.500 1046.200L786 1042.500A15 15 0 0 1 799 1035Z" fill="#e8453c"/><path d="M786 1042.500L799 1065A15 15 0 0 1 786 1042.500Z" fill="#34a853"/><path d="M786 1042.500A15 15 0 0 0 799 1065L806 1054L792.500 1046Z" fill="#34a853"/><path d="M812 1042.500A15 15 0 0 1 799 1065L806 1054L806 1046Z" fill="#fbbc05"/><circle cx="799" cy="1050" r="7.500" fill="#fff"/><circle cx="799" cy="1050" r="5.800" fill="#4285f4"/></g>
<rect x="797" y="1073" width="4" height="3" rx="1" fill="#9a9a9a"/>
<!-- revit -->
<rect x="828" y="1025" width="50" height="50" rx="4" fill="#2b2b2b"/>
<rect x="841" y="1035" width="25" height="30" rx="2" fill="#0c3f8c"/><rect x="841" y="1035" width="25" height="20" rx="2" fill="#2a74e0"/>
<text x="849" y="1044" class="b" style="font-size:15px">R</text><text x="847" y="1059" class="b" style="font-size:7px">RVT</text>
<rect x="844" y="1070" width="20" height="4" rx="2" fill="#4fc3f7"/>
<!-- others -->
<ellipse cx="908" cy="1050" rx="15" ry="15" fill="#7a33e6"/><path d="M904 1060V1042H909Q916 1043 916 1049Q915 1056 908 1056" fill="none" stroke="#fff" stroke-width="2.500"/>
<rect x="949" y="1035" width="29" height="22" fill="#d8174a"/><path d="M949 1057H978V1065H955Z" fill="#8e0e2e"/><text x="958" y="1045" class="b" style="font-size:15px">A</text><text x="958" y="1060" class="b" style="font-size:6px">CAD</text>
<rect x="1004" y="1035" width="28" height="22" fill="#b21a8a"/><path d="M1004 1057H1032V1065H1010Z" fill="#7a0f5e"/><text x="1012" y="1045" class="b" style="font-size:15px">C</text><text x="1012" y="1060" class="b" style="font-size:6px">C3D</text>
<circle cx="1073" cy="1050" r="14" fill="#1b5587"/><path d="M1059 1052L1070 1056" stroke="#fff" stroke-width="4"/><circle cx="1077" cy="1047" r="5" fill="none" stroke="#fff" stroke-width="2"/><circle cx="1070" cy="1056" r="3.500" fill="#fff"/>
<rect x="1114" y="1036" width="28" height="28" rx="3" fill="#330000"/><text x="1119" y="1050" style="font-size:17px;font-weight:bold;fill:#ff9a00">Ai</text>
<rect x="1169" y="1035" width="29" height="30" fill="#fff"/><path d="M1183.500 1038L1194 1044V1056L1183.500 1062L1173 1056V1044Z" fill="#1669a8"/><path d="M1183.500 1043V1057M1178 1047L1189 1053" stroke="#fff" stroke-width="1.500"/>
<circle cx="1238" cy="1050" r="15" fill="#5865f2"/><path d="M1228 1056Q1228 1048 1232 1044Q1238 1042 1244 1044Q1248 1048 1248 1056Q1245 1058 1243 1056H1233Q1231 1058 1228 1056Z" fill="#fff"/><circle cx="1234" cy="1051" r="2" fill="#5865f2"/><circle cx="1242" cy="1051" r="2" fill="#5865f2"/>
<circle cx="1293" cy="1050" r="15" fill="#1ed760"/><path d="M1285 1045Q1293 1043 1302 1047M1286 1050Q1293 1048 1300 1052M1287 1055Q1293 1053 1299 1056" fill="none" stroke="#0c1c10" stroke-width="2.200"/>
<rect x="1334" y="1036" width="28" height="28" rx="3" fill="#001e36"/><text x="1339" y="1050" style="font-size:16px;font-weight:bold;fill:#31a8ff">Ps</text>
<circle cx="1403" cy="1050" r="15" fill="#9a9a9a"/><path d="M1390 1044Q1403 1036 1416 1048M1389 1050Q1403 1044 1417 1055" fill="none" stroke="#e0e0e0" stroke-width="3"/><path d="M1392 1058Q1403 1056 1412 1061Q1403 1068 1392 1058Z" fill="#333"/>
<path d="M1449 1046Q1448 1062 1459 1066Q1470 1062 1467 1049Q1464 1056 1458 1056Q1452 1054 1449 1046Z" fill="#14507a"/><path d="M1458 1034Q1446 1040 1452 1050Q1457 1056 1466 1050Q1460 1052 1456 1046Q1454 1040 1458 1034Z" fill="#7fae3a"/>
<!-- tray -->
<path d="M1586 1054L1592 1047L1598 1054" fill="none" stroke="#eee" stroke-width="1.800"/>
<rect x="1625" y="1043" width="15" height="16" rx="3" fill="none" stroke="#e6e6e6" stroke-width="1.500"/><path d="M1625 1053H1640" stroke="#e6e6e6" stroke-width="1.500"/>
<text x="1669" y="1040" style="font-size:15px;fill:#eee" textLength="24" lengthAdjust="spacingAndGlyphs">ESP</text>
<text x="1669" y="1062" style="font-size:15px;fill:#eee" textLength="25" lengthAdjust="spacingAndGlyphs">LAA</text>
<path d="M1718 1049Q1727 1040 1736 1049M1721 1053Q1727 1047 1733 1053M1724 1056Q1727 1053 1730 1056" fill="none" stroke="#eee" stroke-width="1.700"/><circle cx="1727" cy="1059" r="1.500" fill="#eee"/>
<path d="M1750 1048H1754L1758 1044V1058L1754 1055H1750Z" fill="none" stroke="#eee" stroke-width="1.300"/><path d="M1761 1047Q1763 1051 1761 1055M1764 1045Q1767 1051 1764 1057" fill="none" stroke="#eee" stroke-width="1.300"/>
<rect x="1780" y="1046" width="16" height="12" rx="2" fill="none" stroke="#eee" stroke-width="1.400"/><rect x="1782" y="1048" width="10" height="8" fill="#eee"/><path d="M1783 1046V1041H1787" fill="none" stroke="#eee"/>
<text x="1863" y="1040" style="font-size:14.500px;fill:#eee" textLength="33" lengthAdjust="spacingAndGlyphs">11:08</text>
<text x="1819" y="1062" style="font-size:14.500px;fill:#eee" textLength="77" lengthAdjust="spacingAndGlyphs">29/04/2025</text>
</svg>
</body></html>
